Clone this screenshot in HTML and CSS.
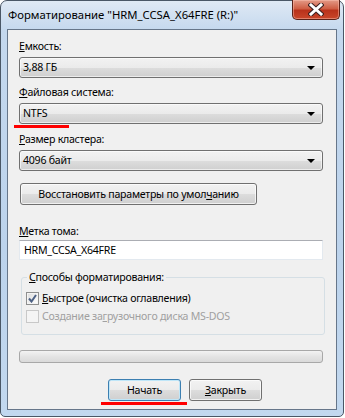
FILE: index.html
```html
<!DOCTYPE html>
<html lang="ru">
<head>
    <meta charset="UTF-8">
    <meta name="viewport" content="width=device-width, initial-scale=1.0">
    <title>Форматирование</title>
    <link rel="stylesheet" href="styles.css">
</head>
<body>
    <div class="window">
        <div class="titlebar">
            <span class="title">Форматирование "HRM_CCSA_X64FRE (R:)"</span>
            <button type="button" class="close">
                <svg width="16" height="13" viewBox="0 0 16 13">
                    <path d="M3 2 L13 11 M13 2 L3 11" stroke="#3b2020" stroke-width="5" stroke-linecap="square"/>
                    <path d="M3 2 L13 11 M13 2 L3 11" stroke="#ffffff" stroke-width="3" stroke-linecap="square"/>
                </svg>
            </button>
        </div>
        <div class="client">
            <div class="label l1"><u>Е</u>мкость:</div>
            <div class="combo">3,88 ГБ<span class="arrow"></span></div>

            <div class="label l2"><u>Ф</u>айловая система:</div>
            <div class="combo marked">NTFS<span class="arrow"></span><span class="redline ntfs"></span></div>

            <div class="label l3"><u>Р</u>азмер кластера:</div>
            <div class="combo">4096 байт<span class="arrow"></span></div>

            <button type="button" class="btn restore">Восстановить параметры по умол<u>ч</u>анию</button>

            <div class="label l4"><u>М</u>етка тома:</div>
            <div class="textbox">HRM_CCSA_X64FRE</div>

            <div class="group">
                <div class="legend"><u>С</u>пособы форматирования:</div>
                <div class="check-row">
                    <span class="checkbox checked">
                        <svg width="9" height="9" viewBox="0 0 9 9">
                            <path d="M1 4.5 L3.5 7.5 L8 1" fill="none" stroke="#4d6185" stroke-width="2"/>
                        </svg>
                    </span>
                    <span><u>Б</u>ыстрое (очистка оглавления)</span>
                </div>
                <div class="check-row disabled">
                    <span class="checkbox"></span>
                    <span>Создание за<u>г</u>рузочного диска MS-DOS</span>
                </div>
            </div>

            <div class="progress"></div>

            <div class="actions">
                <button type="button" class="btn default">Начать<span class="redline start"></span></button>
                <button type="button" class="btn"><u>З</u>акрыть</button>
            </div>
        </div>
    </div>
</body>
</html>
```

FILE: styles.css
```css
body {
    margin: 0;
    background: #ffffff;
    font-family: "Noto Sans", "Liberation Sans", sans-serif;
    font-size: 10.6px;
    letter-spacing: -0.25px;
    color: #000;
}
.window {
    box-sizing: border-box;
    width: 344px;
    height: 417px;
    border: 1px solid #4a5766;
    border-radius: 7px 7px 5px 5px;
    background: linear-gradient(#dfe9f4, #c4d8ee 30px, #bcd3ec 60%, #c2d8ef);
    display: flex;
    flex-direction: column;
}
.titlebar {
    height: 28px;
    display: flex;
    align-items: flex-start;
    position: relative;
}
.title {
    margin: 6px 0 0 7px;
    font-size: 11.3px;
    letter-spacing: 0;
    white-space: nowrap;
}
.close {
    position: absolute;
    right: 3px;
    top: -1px;
    width: 48px;
    height: 20px;
    border: 1px solid #5a2219;
    border-top: none;
    border-radius: 0 0 5px 5px;
    background: linear-gradient(#e39a87, #cf5f45 45%, #b9321b 55%, #c9462a);
    box-shadow: inset 0 0 0 1px rgba(255, 200, 185, 0.45);
    display: flex;
    align-items: center;
    justify-content: center;
    padding: 0;
}
.client {
    flex: 1;
    margin: 0 6px 6px;
    border: 1px solid #66768a;
    background: #f0f0f0;
    padding: 0 13px 0 11px;
    display: flex;
    flex-direction: column;
}
.label {
    line-height: 15px;
    height: 15px;
    white-space: nowrap;
}
.l1 { margin-top: 9px; }
.l2 { margin-top: 7px; }
.l3 { margin-top: 8px; }
.l4 { margin-top: 19px; }
.combo {
    position: relative;
    box-sizing: border-box;
    height: 21px;
    margin-top: 3px;
    border: 1px solid #707070;
    border-radius: 3px;
    background: linear-gradient(#f2f2f2, #ebebeb 50%, #dddddd 51%, #cfcfcf);
    box-shadow: inset 0 0 0 1px rgba(255, 255, 255, 0.6);
    padding-left: 3px;
    line-height: 19px;
}
.arrow {
    position: absolute;
    right: 7px;
    top: 8px;
    width: 0;
    height: 0;
    border-left: 4px solid transparent;
    border-right: 4px solid transparent;
    border-top: 4px solid #000;
}
.redline {
    position: absolute;
    height: 3px;
    background: #f00;
}
.ntfs {
    left: -6px;
    bottom: -5px;
    width: 55px;
}
.start {
    left: -8px;
    bottom: -5px;
    width: 86px;
}
.btn {
    box-sizing: border-box;
    height: 22px;
    border: 1px solid #707070;
    border-radius: 3px;
    background: linear-gradient(#f2f2f2, #ebebeb 50%, #dddddd 51%, #cfcfcf);
    box-shadow: inset 0 0 0 1px rgba(255, 255, 255, 0.7);
    font-family: inherit;
    font-size: inherit;
    letter-spacing: inherit;
    color: #000;
    padding: 0;
    white-space: nowrap;
}
.restore {
    align-self: flex-start;
    width: 237px;
    margin: 12px 0 0 1px;
}
.textbox {
    box-sizing: border-box;
    height: 20px;
    margin-top: 1px;
    background: #fff;
    border: 1px solid #e3e9ef;
    border-top-color: #abadb3;
    padding-left: 4px;
    line-height: 18px;
}
.group {
    position: relative;
    box-sizing: border-box;
    height: 58px;
    margin: 17px -2px 0 2px;
    border: 1px solid #d5dfe5;
    border-radius: 3px;
    padding: 10px 0 0 4px;
}
.legend {
    position: absolute;
    top: -8px;
    left: 5px;
    padding: 0 2px;
    background: #f0f0f0;
    line-height: 15px;
}
.check-row {
    display: flex;
    align-items: center;
    gap: 3px;
    height: 16px;
    margin-top: 2px;
}
.check-row.disabled {
    color: #a0a0a0;
}
.checkbox {
    box-sizing: border-box;
    width: 13px;
    height: 13px;
    border: 1px solid #8e8f8f;
    background: linear-gradient(135deg, #dcdcdc, #ffffff);
    box-shadow: inset 0 0 0 1px #f4f4f4;
    display: flex;
    align-items: center;
    justify-content: center;
}
.disabled .checkbox {
    border-color: #c8c8c8;
    background: #f4f4f4;
}
.progress {
    box-sizing: border-box;
    height: 13px;
    margin-top: 15px;
    border: 1px solid #a8a8a8;
    border-radius: 3px;
    background: linear-gradient(#f3f3f3, #e4e4e4 50%, #dadada);
}
.actions {
    display: flex;
    gap: 8px;
    margin: 16px 0 0 89px;
}
.actions .btn {
    position: relative;
    width: 73px;
}
.btn.default {
    border-color: #3c7fb1;
    box-shadow: inset 0 0 0 1px #bfe6f8;
}
```
